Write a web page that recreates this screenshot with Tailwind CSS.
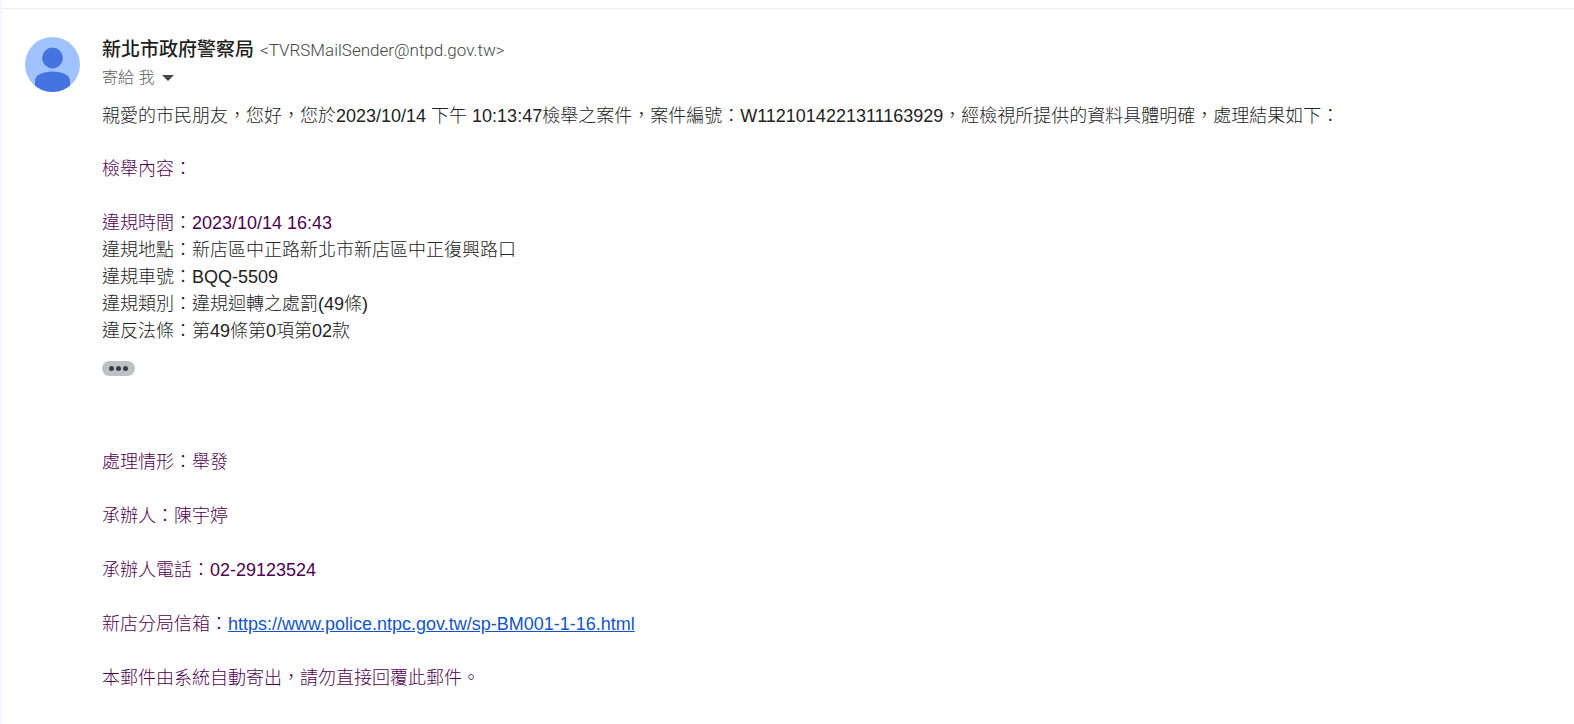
<!DOCTYPE html>
<html lang="zh-Hant">
<head>
    <meta charset="UTF-8">
    <meta name="viewport" content="width=device-width, initial-scale=1.0">
    <title>新北市政府警察局</title>
    <script src="https://cdn.jsdelivr.net/npm/@tailwindcss/browser@4"></script>
</head>
<body class="bg-white font-['Liberation_Sans','Noto_Sans_CJK_TC',sans-serif] text-[#222222]">
    <div class="min-h-screen border-l-3 border-[#f6f8fc]">
        <div class="h-2 border-b border-[#eceff1] box-content"></div>

        <article class="flex pl-[22px] pr-4 pt-7">
            <!-- Avatar -->
            <svg class="w-[55px] h-[55px] shrink-0" viewBox="0 0 55 55" aria-hidden="true">
                <defs>
                    <clipPath id="avatar"><circle cx="27.5" cy="27.5" r="27.5" /></clipPath>
                </defs>
                <g clip-path="url(#avatar)">
                    <rect width="55" height="55" fill="#a0c3ff" />
                    <circle cx="27.5" cy="21" r="10.4" fill="#4374e0" />
                    <path d="M10 60V44c0-6 8-9.500 17.500-9.500S45 38 45 44v16z" fill="#4374e0" />
                </g>
            </svg>

            <div class="flex-1 min-w-0 pl-[22px]">
                <!-- Sender -->
                <header>
                    <h1 class="flex items-center gap-[6px] h-[27px] whitespace-nowrap">
                        <span class="text-[19px] font-medium text-[#1f1f1f]">新北市政府警察局</span>
                        <span class="font-[Roboto,sans-serif] text-[17px] font-light text-[#444746]">&lt;TVRSMailSender@ntpd.gov.tw&gt;</span>
                    </h1>
                    <button type="button" class="flex items-center gap-2 h-[27px] text-base font-light text-[#5e5e5e]">
                        寄給 我
                        <svg class="w-3 h-[6px]" viewBox="0 0 12 6" fill="#444746" aria-hidden="true"><path d="M0 0h12L6 6z" /></svg>
                    </button>
                </header>

                <!-- Body -->
                <div class="mt-3 text-lg leading-[27px] font-light">
                    <p>親愛的市民朋友，您好，您於2023/10/14 下午 10:13:47檢舉之案件，案件編號：W1121014221311163929，經檢視所提供的資料具體明確，處理結果如下：</p>
                    <p class="mt-[26px] text-[#500050]">檢舉內容：</p>
                    <p class="mt-[27px] text-[#500050]">違規時間：2023/10/14 16:43</p>
                    <p>違規地點：新店區中正路新北市新店區中正復興路口</p>
                    <p>違規車號：BQQ-5509</p>
                    <p>違規類別：違規迴轉之處罰(49條)</p>
                    <p>違反法條：第49條第0項第02款</p>

                    <button type="button" aria-label="顯示已截斷的內容" class="mt-4 flex items-center justify-center gap-[2px] w-[33px] h-[15px] rounded-full bg-[#bdc1c6]">
                        <span class="size-[5px] rounded-full bg-[#3c4043]"></span>
                        <span class="size-[5px] rounded-full bg-[#3c4043]"></span>
                        <span class="size-[5px] rounded-full bg-[#3c4043]"></span>
                    </button>

                    <div class="mt-[73px] flex flex-col gap-[27px] text-[#500050]">
                        <p>處理情形：舉發</p>
                        <p>承辦人：陳宇婷</p>
                        <p>承辦人電話：02-29123524</p>
                        <p>新店分局信箱：<a href="https://www.police.ntpc.gov.tw/sp-BM001-1-16.html" class="text-[#1155cc] underline">https://www.police.ntpc.gov.tw/sp-BM001-1-16.html</a></p>
                        <p>本郵件由系統自動寄出，請勿直接回覆此郵件。</p>
                    </div>
                </div>
            </div>
        </article>
    </div>
</body>
</html>
